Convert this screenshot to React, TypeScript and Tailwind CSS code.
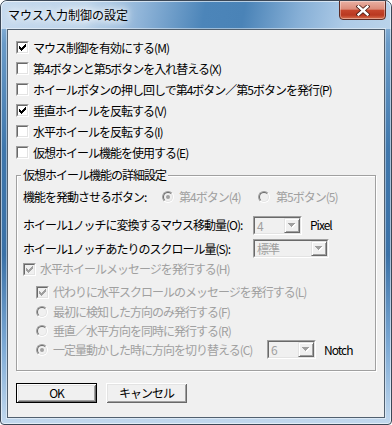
import React from "react";

const FONT = "font-['Noto_Sans_CJK_JP','Noto_Sans',sans-serif]";

function Check({ checked, disabled }: { checked?: boolean; disabled?: boolean }) {
  return (
    <span className="flex w-[13px] h-[13px] shrink-0 border border-t-[#a0a0a0] border-l-[#a0a0a0] border-b-white border-r-white">
      <span
        className={`flex w-[11px] h-[11px] border border-t-[#696969] border-l-[#696969] border-b-[#e3e3e3] border-r-[#e3e3e3] ${
          disabled ? "bg-[#f0f0f0]" : "bg-white"
        }`}
      >
        {checked && (
          <svg width="9" height="9" viewBox="0 0 9 9" shapeRendering="crispEdges">
            <path
              d="M7 1h1v1h-1z M6 2h2v1h-2z M1 3h1v1h-1z M5 3h3v1h-3z M1 4h2v1h-2z M4 4h3v1h-3z M1 5h5v1h-5z M2 6h3v1h-3z M3 7h1v1h-1z"
              fill={disabled ? "#a0a0a0" : "#000"}
            />
          </svg>
        )}
      </span>
    </span>
  );
}

function Radio({ checked }: { checked?: boolean }) {
  return (
    <span className="flex w-[12px] h-[12px] shrink-0 rounded-full border border-t-[#a0a0a0] border-l-[#a0a0a0] border-b-white border-r-white">
      <span className="flex w-[10px] h-[10px] items-center justify-center rounded-full border border-t-[#696969] border-l-[#696969] border-b-[#e3e3e3] border-r-[#e3e3e3] bg-[#f0f0f0]">
        {checked && <span className="w-[4px] h-[4px] rounded-full bg-[#a0a0a0]" />}
      </span>
    </span>
  );
}

function Combo({ value, wide }: { value: string; wide?: boolean }) {
  return (
    <div
      className={`flex ${wide ? "w-[76px]" : "w-[49px]"} h-[19px] border border-t-[#a0a0a0] border-l-[#a0a0a0] border-b-white border-r-white`}
    >
      <div className="flex flex-1 border border-t-[#696969] border-l-[#696969] border-b-[#e3e3e3] border-r-[#e3e3e3] bg-[#f0f0f0]">
        <span className="flex-1 pl-[2px] text-[#a0a0a0] leading-[15px]">{value}</span>
        <span className="flex w-[16px] h-full items-center justify-center border border-t-[#e3e3e3] border-l-[#e3e3e3] border-b-[#696969] border-r-[#696969] bg-[#f0f0f0] shadow-[inset_1px_1px_0_#fff,inset_-1px_-1px_0_#a0a0a0]">
          <svg width="8" height="5" viewBox="0 0 8 5" shapeRendering="crispEdges">
            <path d="M1 1h7v1H1z M2 2h5v1H2z M3 3h3v1H3z M4 4h1v1H4z" fill="#fff" />
            <path d="M0 0h7v1H0z M1 1h5v1H1z M2 2h3v1H2z M3 3h1v1H3z" fill="#a0a0a0" />
          </svg>
        </span>
      </div>
    </div>
  );
}

function CheckRow({ label, checked }: { label: string; checked?: boolean }) {
  return (
    <div className="flex h-[21px] items-center gap-[4px]">
      <Check checked={checked} />
      <span>{label}</span>
    </div>
  );
}

export default function App() {
  return (
    <div className={`w-[392px] h-[425px] ${FONT} text-[12px] tracking-[-1px] leading-[14px] text-black`}>
      <div className="flex flex-col w-[392px] h-[425px] rounded-t-[7px] rounded-b-[4px] border border-[#3b4756] shadow-[inset_0_0_0_1px_rgba(255,255,255,0.55)] bg-[linear-gradient(180deg,#a9c8e5_0%,#6a9bc8_10%,#3f77ac_35%,#3a71a7_60%,#7eabd6_82%,#c3d9ee_100%)] overflow-hidden">
        {/* Title bar */}
        <div className="flex h-[28px] shrink-0 justify-between rounded-t-[6px] bg-[linear-gradient(100deg,#c6daee_0%,#bcd4ea_22%,#8fb4d8_36%,#4c85b9_52%,#4a83b7_62%,#86afd6_76%,#aecbe7_88%,#bad3ea_100%)] shadow-[inset_0_1px_0_rgba(255,255,255,0.6),inset_1px_0_0_rgba(255,255,255,0.5),inset_-1px_0_0_rgba(255,255,255,0.5)]">
          <div className="pl-[7px] pt-[6px] text-[12px] tracking-[0px] leading-[16px] text-[#000] [text-shadow:0_0_6px_#fff,0_0_10px_#fff,0_0_14px_#fff]">
            マウス入力制御の設定
          </div>
          <div className="mr-[5px] -mt-[1px] flex w-[47px] h-[20px] items-center justify-center rounded-b-[4px] border border-[#5b2b24] bg-[linear-gradient(180deg,#e9b0a3_0%,#dc8c7a_45%,#c5452c_52%,#b93820_78%,#d8704f_100%)] shadow-[inset_0_0_0_1px_rgba(255,255,255,0.35)]">
            <svg width="14" height="11" viewBox="0 0 14 11">
              <path d="M2.5 1.5 L11.5 9.5 M11.5 1.5 L2.5 9.5" stroke="#4a1d15" strokeWidth="4" strokeLinecap="square" />
              <path d="M2.5 1.5 L11.5 9.5 M11.5 1.5 L2.5 9.5" stroke="#fff" strokeWidth="2.4" strokeLinecap="square" />
            </svg>
          </div>
        </div>

        {/* Body */}
        <div className="flex flex-1 px-[6px] pb-[6px]">
          <div className="flex flex-col flex-1 border border-[#51606f] bg-[#f0f0f0] shadow-[0_0_0_1px_rgba(255,255,255,0.45)]">
            <div className="flex flex-col pt-[7px] pl-[8px]">
              <CheckRow checked label="マウス制御を有効にする(M)" />
              <CheckRow label="第4ボタンと第5ボタンを入れ替える(X)" />
              <CheckRow label="ホイールボタンの押し回しで第4ボタン／第5ボタンを発行(P)" />
              <CheckRow checked label="垂直ホイールを反転する(V)" />
              <CheckRow label="水平ホイールを反転する(I)" />
              <CheckRow label="仮想ホイール機能を使用する(E)" />
            </div>

            {/* Group box */}
            <div className="relative mx-[8px] mt-[12px] h-[196px] border border-[#a0a0a0] shadow-[inset_1px_1px_0_#fff,1px_1px_0_#fff]">
              <span className="absolute left-[4px] -top-[8px] px-[2px] bg-[#f0f0f0] leading-[14px]">
                仮想ホイール機能の詳細設定
              </span>
              <div className="flex flex-col pt-[11px] pl-[6px]">
                <div className="flex h-[20px] items-center">
                  <span className="w-[139px]">機能を発動させるボタン:</span>
                  <div className="flex w-[96px] items-center gap-[5px] text-[#a0a0a0]">
                    <Radio checked />
                    <span>第4ボタン(4)</span>
                  </div>
                  <div className="flex items-center gap-[6px] text-[#a0a0a0]">
                    <Radio />
                    <span>第5ボタン(5)</span>
                  </div>
                </div>
                <div className="flex h-[20px] mt-[8px] items-center">
                  <span className="w-[230px]">ホイール1ノッチに変換するマウス移動量(O):</span>
                  <Combo value="4" />
                  <span className="ml-[8px]">Pixel</span>
                </div>
                <div className="flex h-[19px] mt-[4px] items-center">
                  <span className="w-[230px]">ホイール1ノッチあたりのスクロール量(S):</span>
                  <Combo value="標準" wide />
                </div>
                <div className="flex h-[20px] mt-[1px] items-center gap-[4px] text-[#a0a0a0]">
                  <Check checked disabled />
                  <span>水平ホイールメッセージを発行する(H)</span>
                </div>
                <div className="flex h-[20px] mt-[3px] pl-[13px] items-center gap-[4px] text-[#a0a0a0]">
                  <Check checked disabled />
                  <span>代わりに水平スクロールのメッセージを発行する(L)</span>
                </div>
                <div className="flex h-[20px] pl-[13px] items-center gap-[5px] text-[#a0a0a0]">
                  <Radio />
                  <span>最初に検知した方向のみ発行する(F)</span>
                </div>
                <div className="flex h-[18px] pl-[13px] items-center gap-[5px] text-[#a0a0a0]">
                  <Radio />
                  <span>垂直／水平方向を同時に発行する(R)</span>
                </div>
                <div className="flex h-[19px] pl-[13px] items-center">
                  <div className="flex w-[231px] items-center gap-[5px] text-[#a0a0a0]">
                    <Radio checked />
                    <span>一定量動かした時に方向を切り替える(C)</span>
                  </div>
                  <Combo value="6" />
                  <span className="ml-[8px]">Notch</span>
                </div>
              </div>
            </div>

            {/* Buttons */}
            <div className="flex mt-[12px] pl-[8px] gap-[9px]">
              <button className="flex w-[81px] h-[20px] items-center justify-center border border-black bg-[#f0f0f0] shadow-[inset_1px_1px_0_#fff,inset_-1px_-1px_0_#696969,inset_2px_2px_0_#e3e3e3,inset_-2px_-2px_0_#a0a0a0]">
                OK
              </button>
              <button className="flex w-[81px] h-[20px] items-center justify-center bg-[#f0f0f0] shadow-[inset_1px_1px_0_#fff,inset_-1px_-1px_0_#696969,inset_2px_2px_0_#e3e3e3,inset_-2px_-2px_0_#a0a0a0]">
                キャンセル
              </button>
            </div>
          </div>
        </div>
      </div>
    </div>
  );
}
